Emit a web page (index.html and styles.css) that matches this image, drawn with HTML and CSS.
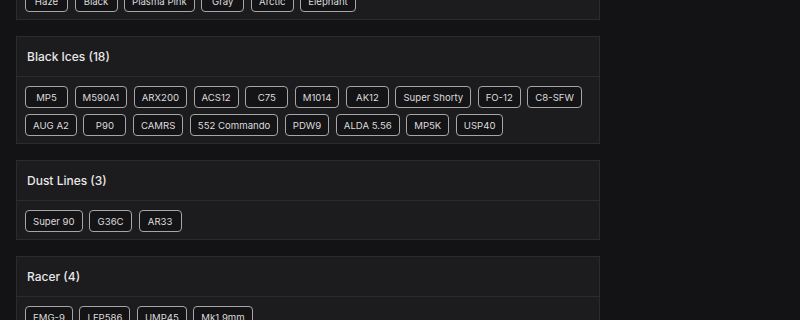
FILE: index.html
```html
<!DOCTYPE html>
<html>
<head>
<meta charset="utf-8">
<link rel="stylesheet" href="styles.css">
</head>
<body>
<main class="list">
  <section class="card">
    <header class="card-head">Camos (6)</header>
    <div class="card-body">
      <span class="chip">Haze</span>
      <span class="chip">Black</span>
      <span class="chip">Plasma Pink</span>
      <span class="chip">Gray</span>
      <span class="chip">Arctic</span>
      <span class="chip">Elephant</span>
    </div>
  </section>
  <section class="card">
    <header class="card-head">Black Ices (18)</header>
    <div class="card-body">
      <span class="chip">MP5</span>
      <span class="chip">M590A1</span>
      <span class="chip">ARX200</span>
      <span class="chip">ACS12</span>
      <span class="chip">C75</span>
      <span class="chip">M1014</span>
      <span class="chip">AK12</span>
      <span class="chip">Super Shorty</span>
      <span class="chip">FO-12</span>
      <span class="chip">C8-SFW</span>
      <span class="chip">AUG A2</span>
      <span class="chip">P90</span>
      <span class="chip">CAMRS</span>
      <span class="chip">552 Commando</span>
      <span class="chip">PDW9</span>
      <span class="chip">ALDA 5.56</span>
      <span class="chip">MP5K</span>
      <span class="chip">USP40</span>
    </div>
  </section>
  <section class="card">
    <header class="card-head">Dust Lines (3)</header>
    <div class="card-body">
      <span class="chip">Super 90</span>
      <span class="chip">G36C</span>
      <span class="chip">AR33</span>
    </div>
  </section>
  <section class="card">
    <header class="card-head">Racer (4)</header>
    <div class="card-body">
      <span class="chip">EMG-9</span>
      <span class="chip">LFP586</span>
      <span class="chip">UMP45</span>
      <span class="chip">Mk1 9mm</span>
    </div>
  </section>
</main>
</body>
</html>
```
FILE: styles.css
```css
html, body {
  margin: 0;
  padding: 0;
  background: #131215;
  overflow: hidden;
}
body {
  font-family: Inter, "Liberation Sans", sans-serif;
  color: #e6e6e6;
}
.list {
  width: 584px;
  margin: -60px 0 0 16px;
  display: flex;
  flex-direction: column;
  gap: 16px;
}
.card {
  background: #1c1b1e;
  border: 1px solid #2b2a2d;
}
.card-head {
  height: 39px;
  padding: 0 10px;
  display: flex;
  align-items: center;
  font-size: 12px;
  font-weight: 500;
  color: #e8e8e8;
  border-bottom: 1px solid #2b2a2d;
}
.card-body {
  padding: 9px 8px 7px;
  display: flex;
  flex-wrap: wrap;
  gap: 6px 6.5px;
}
.chip {
  box-sizing: border-box;
  min-width: 43px;
  height: 22px;
  padding: 0 7px;
  display: inline-flex;
  align-items: center;
  justify-content: center;
  font-size: 9.6px;
  color: #dcdcdc;
  background: #141316;
  border: 1px solid #a6a6a6;
  border-radius: 4px;
  white-space: nowrap;
}
```
